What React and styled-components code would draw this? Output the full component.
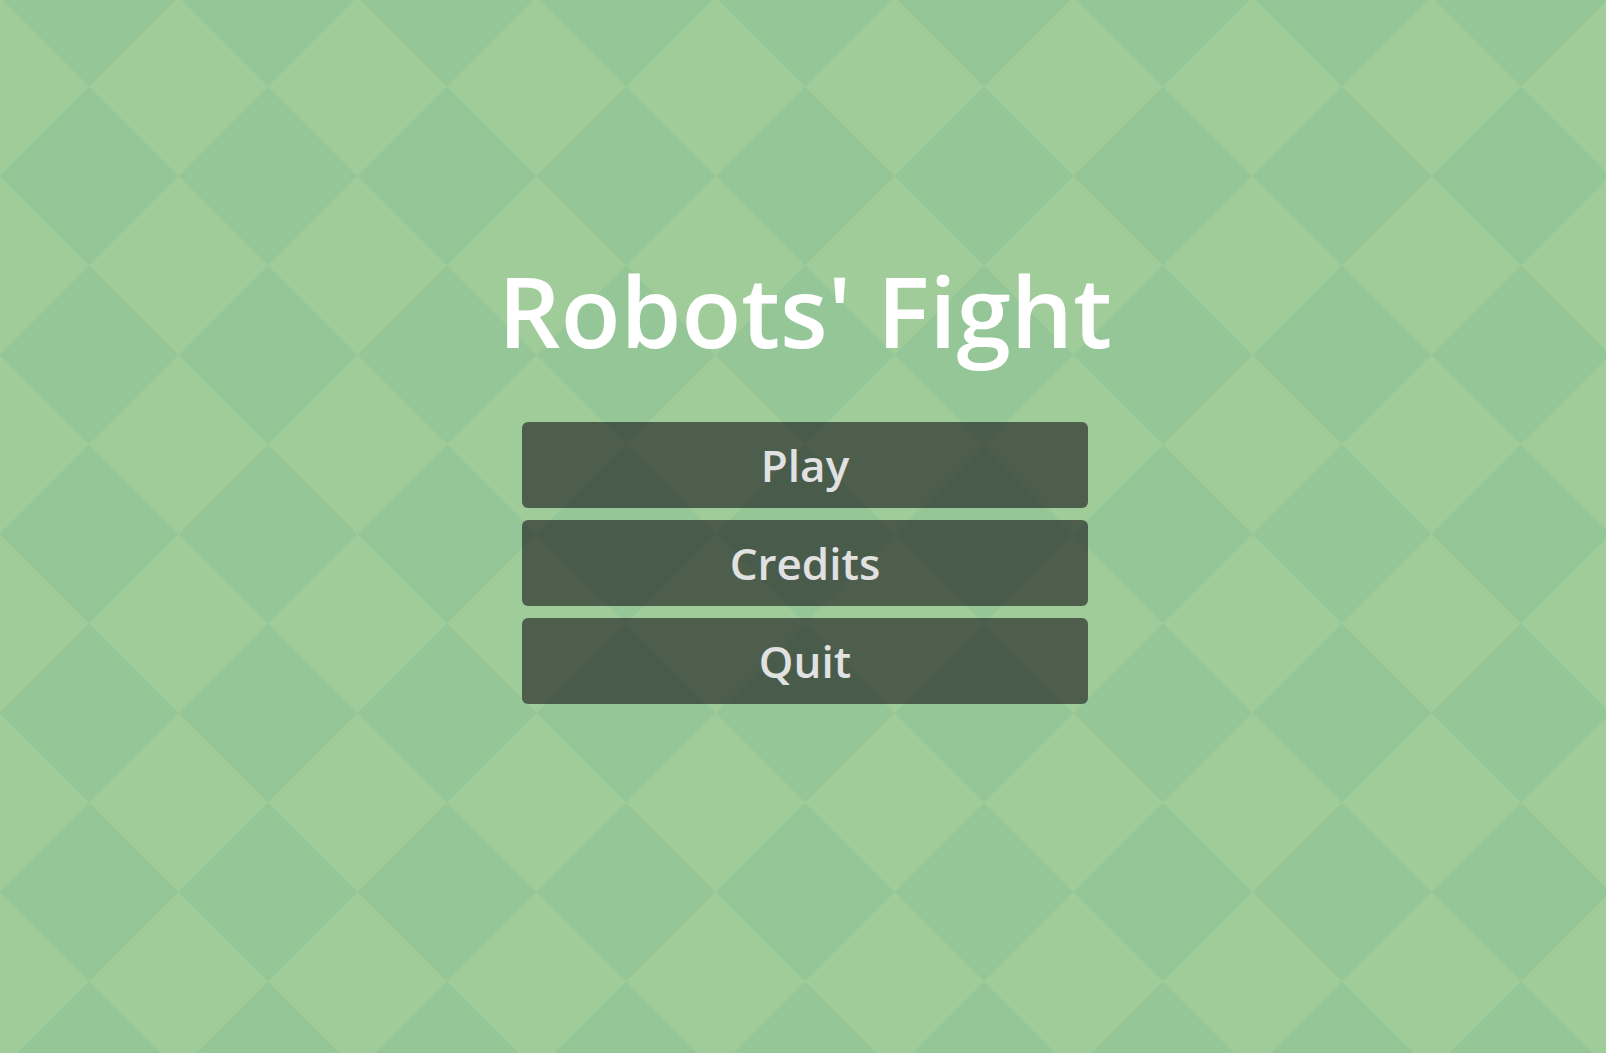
import React from "react";
import styled, { createGlobalStyle } from "styled-components";

const LIGHT = "#a0cc9a";
const DARK = "#94c698";
const TILE = 179;

const GlobalStyle = createGlobalStyle`
  html, body {
    margin: 0;
    padding: 0;
    height: 100%;
  }
  body {
    font-family: "Open Sans", "Noto Sans", sans-serif;
    overflow: hidden;
  }
`;

const Screen = styled.main`
  box-sizing: border-box;
  width: 100vw;
  height: 100vh;
  display: flex;
  flex-direction: column;
  align-items: center;
  padding-top: 245px;
  padding-left: 4px;
  background-color: ${LIGHT};
  background-image:
    linear-gradient(135deg, ${DARK} 25%, transparent 25%),
    linear-gradient(225deg, ${DARK} 25%, transparent 25%),
    linear-gradient(315deg, ${DARK} 25%, transparent 25%),
    linear-gradient(45deg, ${DARK} 25%, transparent 25%);
  background-size: ${TILE}px ${TILE}px;
  background-position: ${-TILE / 2 - 0.5}px ${86.5 - TILE / 2}px;
`;

const Title = styled.h1`
  margin: 0 0 47px;
  font-family: "Open Sans", "Noto Sans", sans-serif;
  font-weight: 600;
  font-size: 98px;
  line-height: 130px;
  color: #ffffff;
  white-space: nowrap;
`;

const Menu = styled.nav`
  display: flex;
  flex-direction: column;
  gap: 12px;
  width: 566px;
`;

const MenuButton = styled.button`
  box-sizing: border-box;
  height: 86px;
  width: 100%;
  padding: 0;
  border: none;
  border-radius: 6px;
  background: rgba(38, 42, 40, 0.68);
  color: #e1e1e1;
  font-family: "Open Sans", "Noto Sans", sans-serif;
  font-weight: 600;
  font-size: 44px;
  line-height: 86px;
  cursor: pointer;
`;

const items = ["Play", "Credits", "Quit"];

export default function App() {
  return (
    <>
      <GlobalStyle />
      <Screen>
        <Title>Robots' Fight</Title>
        <Menu>
          {items.map((label) => (
            <MenuButton key={label}>{label}</MenuButton>
          ))}
        </Menu>
      </Screen>
    </>
  );
}
